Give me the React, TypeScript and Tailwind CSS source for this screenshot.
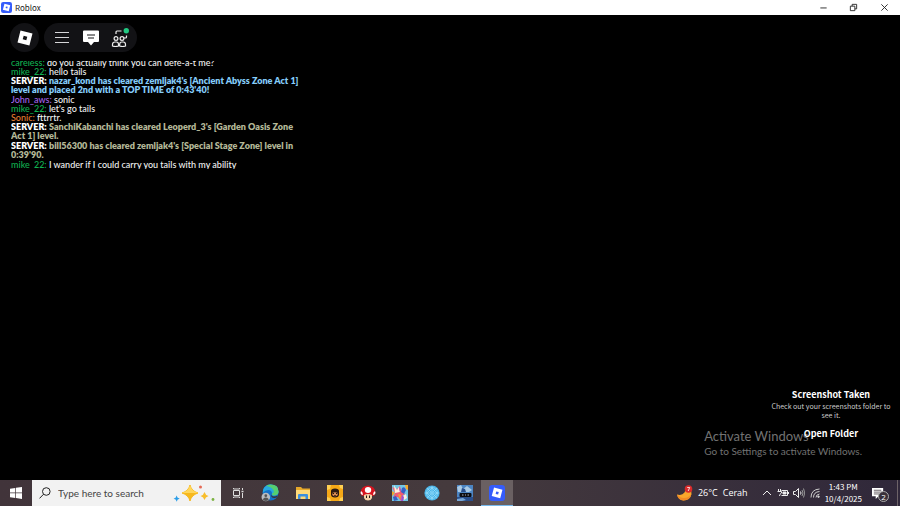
import React from 'react';

type ChatLine = {
  name: string;
  nameClass: string;
  text: string;
  textClass?: string;
};

const SERVER_NAME = 'font-extrabold text-white';
const SERVER_BLUE = 'font-extrabold text-[#85cdfa]';
const SERVER_TAN = 'font-extrabold text-[#b4b898]';

const messages: ChatLine[] = [
  { name: 'careless:', nameClass: 'text-[#10b050]', text: 'do you actually think you can defe-a-t me?' },
  { name: 'mike_22:', nameClass: 'text-[#10b050]', text: 'hello tails' },
  {
    name: 'SERVER:',
    nameClass: SERVER_NAME,
    text: "nazar_kond has cleared zemljak4's [Ancient Abyss Zone Act 1]\nlevel and placed 2nd with a TOP TIME of 0:43'40!",
    textClass: SERVER_BLUE,
  },
  { name: 'John_aws:', nameClass: 'text-[#a566ee]', text: 'sonic' },
  { name: 'mike_22:', nameClass: 'text-[#10b050]', text: "let's go tails" },
  { name: 'Sonic:', nameClass: 'text-[#e67e30]', text: 'fttrrtr.' },
  {
    name: 'SERVER:',
    nameClass: SERVER_NAME,
    text: "SanchiKabanchi has cleared Leoperd_3's [Garden Oasis Zone\nAct 1] level.",
    textClass: SERVER_TAN,
  },
  {
    name: 'SERVER:',
    nameClass: SERVER_NAME,
    text: "bill56300 has cleared zemljak4's [Special Stage Zone] level in\n0:39'90.",
    textClass: SERVER_TAN,
  },
  { name: 'mike_22:', nameClass: 'text-[#10b050]', text: 'I wander if I could carry you tails with my ability' },
];

const RobloxTile = ({ className }: { className: string }) => (
  <svg viewBox="0 0 20 20" className={className}>
    <rect width="20" height="20" rx="4" fill="#355cfb" />
    <path fillRule="evenodd" fill="#fff" d="M6.3 3.2 16.8 6 14 16.7 3.4 13.9ZM9 8l-.7 3.1 3.1.8.8-3.1Z" />
  </svg>
);

const TitleBar = () => (
  <header className="flex h-[15px] shrink-0 items-center bg-white text-[#222]">
    <RobloxTile className="ml-px size-[11px]" />
    <h1 className="ml-[3px] font-['Noto_Sans_CJK_JP',sans-serif] text-[8px] leading-3">Roblox</h1>
    <div className="ml-auto flex h-full">
      <button aria-label="Minimize" className="flex w-[30px] items-center justify-center">
        <svg viewBox="0 0 10 10" className="size-[9px]" stroke="#222" fill="none">
          <path d="M1.500 5.500h7" />
        </svg>
      </button>
      <button aria-label="Restore" className="flex w-[30px] items-center justify-center">
        <svg viewBox="0 0 10 10" className="size-[9px]" stroke="#222" fill="none">
          <path d="M1.500 3.500h5v5h-5zM3.500 3.500v-2h5v5h-2" />
        </svg>
      </button>
      <button aria-label="Close" className="flex w-[32px] items-center justify-center">
        <svg viewBox="0 0 10 10" className="size-[9px]" stroke="#222" fill="none">
          <path d="m1.500 1.500 7 7m0-7-7 7" />
        </svg>
      </button>
    </div>
  </header>
);

const TopBar = () => (
  <nav className="flex gap-[5px] px-[10px] pt-[8px]">
    <button aria-label="Roblox menu" className="flex size-[29px] items-center justify-center rounded-full bg-[#121215]">
      <svg viewBox="0 0 16 16" className="size-4">
        <path fillRule="evenodd" fill="#fff" d="M3.500.5 15.500 3.600 12.400 15.500.5 12.400ZM6.700 5.700 5.700 9.300 9.300 10.300 10.300 6.700Z" />
      </svg>
    </button>
    <div className="flex h-[29px] items-center rounded-full bg-[#121215] px-[3px]">
      <button aria-label="Menu" className="flex w-[29px] justify-center">
        <svg viewBox="0 0 14 12" className="h-3 w-[14px]" stroke="#d5d5d8" fill="none">
          <path d="M0 .5h14M0 5.500h14M0 10.500h14" />
        </svg>
      </button>
      <button aria-label="Chat" className="flex w-[29px] justify-center">
        <svg viewBox="0 0 16 16" className="size-4">
          <path fill="#fff" d="M1 0.500h14q1 0 1 1v9.500q0 1-1 1h-4L8 15.500 5 12H1q-1 0-1-1V1.500q0-1 1-1Z" />
          <path stroke="#141417" strokeWidth="1.200" d="M4 5h8M5 8h6" />
        </svg>
      </button>
      <button aria-label="Friends" className="flex w-[29px] justify-center">
        <svg viewBox="0 0 18 20" className="h-5 w-[18px]" fill="none" stroke="#eee" strokeWidth="1.200">
          <circle cx="5" cy="10.500" r="1.900" />
          <circle cx="11" cy="10.500" r="1.900" />
          <path d="M1.500 18v-1.500q0-2.500 2.500-2.500h1.500q2 0 2 2.500V18q-3 1-6 0ZM8.700 18v-1.500q0-2.500 2-2.500h1.500q2.300 0 2.300 2.500V18q-3 1-5.800 0Z" />
          <path d="M5 6V4q0-1 1-1h4.500M13 10h1.500q1 0 1-1V7.500" />
          <circle cx="15.300" cy="2.800" r="2.700" fill="#22c982" stroke="none" />
        </svg>
      </button>
    </div>
  </nav>
);

const Chat = () => (
  <section
    aria-label="Chat"
    className="mt-[9px] ml-[11px] flex h-[108px] w-[297px] flex-col justify-end overflow-hidden font-['Lato',sans-serif] text-[9px] leading-[9px] font-medium whitespace-pre text-[#f2f2f2]"
  >
    {messages.map((m, i) => (
      <p key={i} className={m.name === 'SERVER:' ? 'mb-px' : ''}>
        <span className={m.nameClass}>{m.name}</span> <span className={m.textClass}>{m.text}</span>
      </p>
    ))}
  </section>
);

const Notices = () => (
  <>
    <div className="absolute right-[38px] bottom-[22px] font-['Lato',sans-serif] text-[#727272]">
      <p className="text-[13px] leading-[16px]">Activate Windows</p>
      <p className="text-[10px] leading-[14px]">Go to Settings to activate Windows.</p>
    </div>
    <aside className="absolute right-[4px] bottom-[39px] flex w-[130px] flex-col items-center text-center font-['Noto_Sans_CJK_JP',sans-serif] text-white">
      <h2 className="text-[9px] leading-[14px] font-bold">Screenshot Taken</h2>
      <p className="text-[7px] leading-[9px] text-[#ccc]">Check out your screenshots folder to see it.</p>
      <button className="mt-[7px] text-[9px] leading-[14px] font-bold">Open Folder</button>
    </aside>
  </>
);

const Sparkles = () => (
  <svg viewBox="0 0 42 18" className="ml-auto h-[18px] w-[42px]">
    <path fill="#f7b91e" d="M17 1q1.500 6 8 8-6.500 2-8 8-1.500-6-8-8 6.500-2 8-8Z" stroke="#f7b91e" strokeLinejoin="round" />
    <path fill="#ffd65c" d="M17 1q1.500 6 8 8H9q6.500-2 8-8Z" />
    <path fill="#f8bd2b" d="M31.500 8q.8 3 4 4-3.200 1-4 4-.8-3-4-4 3.200-1 4-4Z" />
    <path fill="#2c9ee8" d="m3.500 11.500 1.200 2.200 2 .8-2.200 1.200-.7 2-1.200-2.200-2-.8 2.200-1.200Z" />
    <circle cx="27.500" cy="3" r="1.500" fill="#e56a55" />
    <circle cx="40" cy="15.500" r="1.400" fill="#7cb342" />
  </svg>
);

const TaskViewIcon = () => (
  <svg viewBox="0 0 12 12" className="size-3" fill="none" stroke="#ddd">
    <path d="M1.500 3.500h6v5h-6zM1.500 1v1h6V1M1.500 11v-1h6v1M10.500 1v2M10.500 6v5" />
    <path d="M9.500 4.500h2" strokeWidth="1.500" />
  </svg>
);

const EdgeIcon = () => (
  <svg viewBox="0 0 18 18" className="size-[18px]">
    <circle cx="9.500" cy="8.500" r="8" fill="#1471c9" />
    <path fill="#27a8e0" d="M2 6Q4 .5 9.500.5q8 0 8 7 0 4-4.500 4-2.500 0-2-2 0-3-3-3.500Q4 6 2 9Z" />
    <path fill="#55cf70" d="M9.500.5q8 0 8 7 0 4-4.500 4-2.500 0-2-2 3-1 1-4Q10 2.500 5 2 7 .5 9.500.5Z" />
    <path fill="#3a3035" d="M10 9.500q-.5 2.500 3 3 2 0 4-1-1 2.500-3.500 2.500-4 0-3.500-4.500Z" />
    <circle cx="4.800" cy="13" r="4.300" fill="#b8bcc0" />
    <circle cx="4.800" cy="11.700" r="1.400" fill="#555" />
    <path fill="#555" d="M2 16q0-2.500 2.800-2.500T7.600 16q-2.800 2-5.600 0Z" />
  </svg>
);

const FolderIcon = () => (
  <svg viewBox="0 0 16 14" className="h-[14px] w-4">
    <path fill="#e6a92b" d="M1 1h5l1.500 1.500H15V12H1Z" />
    <path fill="#ffd977" d="M1 4h14v9H1Z" />
    <path fill="#3c8fdd" d="M3 13V9q0-1 1-1h8q1 0 1 1v4h-2.500v-2.500h-5V13Z" />
  </svg>
);

const YellowGameIcon = () => (
  <svg viewBox="0 0 16 16" className="size-4">
    <rect width="16" height="16" fill="#f6a817" />
    <path fill="#ffd052" d="M0 0h4L3 4 0 5ZM12 0h4v4l-3-1ZM0 16v-4l3 1 1 3ZM12 16l1-3 3-1v4Z" />
    <path fill="#2b1a12" d="M4 6q0-2.500 4-2.500T12 6v3.500Q12 12.500 8 12.500T4 9.500Z" />
    <path fill="#d98d54" d="M5 8q3-1.500 6 0 0 3-3 3.500Q5 11 5 8Z" />
    <path stroke="#24130b" d="M5.500 8.500h1.500M9 8.500h1.500M7 10.800h2" />
  </svg>
);

const MushroomIcon = () => (
  <svg viewBox="0 0 16 16" className="size-4">
    <path fill="#d6151f" d="M8 .5q7.500.5 7.500 8Q15 11 12 11H4Q1 11 .5 8.500.5 1 8 .5Z" />
    <ellipse cx="8" cy="5" rx="3.200" ry="3" fill="#fff" />
    <path fill="#fff" d="M1 6q2 1 2 4-2 0-2.500-2ZM15 6q-2 1-2 4 2 0 2.500-2Z" />
    <path fill="#f5d3a9" d="M4 10q4-2 8 0v3q-1 2.500-4 2.500T4 13Z" />
    <path stroke="#271914" d="M6.500 10.500v2.500M9.500 10.500v2.500" />
  </svg>
);

const HeroesIcon = () => (
  <svg viewBox="0 0 16 16" className="size-4">
    <rect width="16" height="16" fill="#71c7e6" />
    <path fill="#ee5d76" d="m0 2 5 2 3-3 1 5 4 3-3 2-1 5-3-4-5 1 2-5Z" />
    <path fill="#fff0dd" d="m2 0 3 5 2-3 1 5-5 1ZM11 11l3-2 1 4-3 2Z" />
    <path fill="#385fc4" d="M10 3q3-2 4 2l-2 4-3-2ZM1 12l3-1 2 4-4 1Z" />
    <path fill="#f6a62a" d="M13 0h3v5l-2-1ZM6 9l3 1-1 4ZM0 6l3 2-3 3Z" />
    <path fill="#a44ccb" d="m10 10 2 2-1 4H9ZM7 3l2 1-1 3Z" />
  </svg>
);

const BlueDiscIcon = () => (
  <svg viewBox="0 0 16 16" className="size-4">
    <circle cx="8" cy="8" r="7.600" fill="#4ab5e8" />
    <g fill="none" stroke="#a5e2fb" strokeWidth=".6">
      <circle cx="8" cy="8" r="5.500" />
      <path d="M8 1v14M1 8h14M3 3l10 10M13 3 3 13M8 3l5 5-5 5-5-5Z" />
    </g>
    <circle cx="8" cy="8" r="1.800" fill="#79cef4" />
  </svg>
);

const BlueGameIcon = () => (
  <svg viewBox="0 0 16 16" className="size-4">
    <rect width="16" height="16" fill="#4c85c3" />
    <path fill="#a9cae5" d="M0 2 4 0l2 4 4-3 5 4-3 2H1Z" />
    <path fill="#294f8d" d="m5 3 3 1 1 3H4ZM0 12h16v4H0Z" />
    <rect x="2.500" y="8" width="12" height="4" rx="1" fill="#0c0d12" />
    <path stroke="#a8afba" d="M5 10h1.500M8 10h1M10.500 10H12" />
    <path fill="#78a8d8" d="m0 14 6-1 3 2-4 1H0Z" />
  </svg>
);

const apps = [
  { label: 'Task view', icon: <TaskViewIcon /> },
  { label: 'Edge', icon: <EdgeIcon /> },
  { label: 'File Explorer', icon: <FolderIcon /> },
  { label: 'Fan game', icon: <YellowGameIcon /> },
  { label: 'Mushroom game', icon: <MushroomIcon /> },
  { label: 'Heroes game', icon: <HeroesIcon /> },
  { label: 'Blue disc', icon: <BlueDiscIcon /> },
  { label: 'Blue game', icon: <BlueGameIcon /> },
  { label: 'Roblox', icon: <RobloxTile className="size-4" />, active: true },
];

const Tray = () => (
  <div className="ml-auto flex h-full items-center">
    <button className="flex items-center text-[9px] leading-3">
      <svg viewBox="0 0 16 16" className="mr-[5px] size-4">
        <path fill="#f9a72b" d="M9 1q6 2 5.500 8-1.500 6.500-8 6.500Q1 15 0 9.500q5 1.500 7.500-2Q9.500 4.500 9 1Z" />
        <path fill="#f18a25" d="M0 9.500q1 5.500 6.500 6 6.500 0 8-6.500-3 4-7.500 4Q3 13 0 9.500Z" />
        <circle cx="11.500" cy="4" r="3.800" fill="#d92b2b" />
        <path stroke="#fff" strokeWidth=".8" fill="none" d="M10.200 2.500h2.500L11.200 6" />
      </svg>
      <span className="mr-[5px]">26°C</span>
      <span>Cerah</span>
    </button>
    <button aria-label="Show hidden icons" className="ml-[14px]">
      <svg viewBox="0 0 10 10" className="size-[10px]" fill="none" stroke="#eee">
        <path d="m1 7 4-4 4 4" />
      </svg>
    </button>
    <button aria-label="Battery" className="ml-[5px]">
      <svg viewBox="0 0 12 10" className="h-[10px] w-3" fill="none" stroke="#eee">
        <path d="M4.500 2.500h6v5h-6M11.500 4v2M1.500 1v2M3.500 1v2M.5 3.500h4V5q-2 1-2 3" />
        <path fill="#eee" d="M6 4h3v2H6z" />
      </svg>
    </button>
    <button aria-label="Volume" className="ml-[4px]">
      <svg viewBox="0 0 12 12" className="size-3" fill="none" stroke="#eee">
        <path d="M.5 4.500h2l3-3v9l-3-3h-2zM7.500 4.500q1 1.500 0 3" />
        <path stroke="#999" d="M9 3q2 3 0 6M10.500 1.500q2.500 4.500 0 9" />
      </svg>
    </button>
    <button aria-label="Network" className="ml-[5px]">
      <svg viewBox="0 0 10 10" className="size-[10px]" fill="none" stroke="#ccc">
        <path d="M1 9.500Q1 1.500 9.500 1M3.500 9.500Q3.500 4 9.500 3.500M6 9.500Q6 6.500 9.500 6" />
        <circle cx="8.500" cy="8.700" r=".8" fill="#eee" />
      </svg>
    </button>
    <button className="ml-[5px] text-center font-['Noto_Sans_CJK_JP',sans-serif] text-[8px] leading-[12px]">
      <time className="block">1:43 PM</time>
      <time className="block">10/4/2025</time>
    </button>
    <button aria-label="Notifications" className="relative mr-[8px] ml-[10px] h-[18px] w-[17px]">
      <svg viewBox="0 0 14 14" className="mt-px size-[13px]">
        <path fill="#fff" d="M0 1h12v9H7l-3 3v-3H0Z" />
        <path stroke="#3b3038" d="M2 3.500h8M2 5.500h8M2 7.500h6" strokeWidth=".8" />
      </svg>
      <span className="absolute right-0 bottom-0 flex size-[11px] items-center justify-center rounded-full border border-[#aaa] bg-[#393039] text-[8px] leading-none">
        2
      </span>
    </button>
    <span className="mr-[2px] h-full w-px bg-[#6d6368]" />
  </div>
);

const Taskbar = () => (
  <footer className="flex h-[26px] shrink-0 items-center bg-linear-to-r from-[#41343a] via-[#453a3d] to-[#30283a] font-['Open_Sans',sans-serif] text-white">
    <button aria-label="Start" className="flex w-8 justify-center">
      <svg viewBox="0 0 12 12" className="size-3" fill="#fff">
        <path d="m0 1.700 5.300-.8v4.700H0ZM6 .8 12 0v5.600H6ZM0 6.300h5.300V11L0 10.300ZM6 6.300h6V12l-6-.9Z" />
      </svg>
    </button>
    <label className="flex h-full w-[189px] items-center bg-[#f2f2f2] pr-[6px] pl-[7px]">
      <svg viewBox="0 0 12 12" className="size-3 shrink-0" fill="none" stroke="#222">
        <circle cx="7.300" cy="4.500" r="3.800" />
        <path d="M4.600 7.200.5 11.400" />
      </svg>
      <input
        aria-label="Search"
        placeholder="Type here to search"
        className="ml-[7px] w-[100px] bg-transparent font-['Lato',sans-serif] text-[10px] leading-4 text-[#333] outline-none placeholder:text-[#444]"
      />
      <Sparkles />
    </label>
    <div className="ml-px flex h-full w-[291px] justify-between">
      {apps.map((app) => (
        <button
          key={app.label}
          aria-label={app.label}
          className={`flex h-full w-8 items-center justify-center ${app.active ? 'border-b border-[#76b9ed] bg-[#6a6062]' : ''}`}
        >
          {app.icon}
        </button>
      ))}
    </div>
    <Tray />
  </footer>
);

export default function App() {
  return (
    <div className="flex h-screen flex-col overflow-hidden bg-black">
      <TitleBar />
      <main className="relative min-h-0 flex-1">
        <TopBar />
        <Chat />
        <Notices />
      </main>
      <Taskbar />
    </div>
  );
}
